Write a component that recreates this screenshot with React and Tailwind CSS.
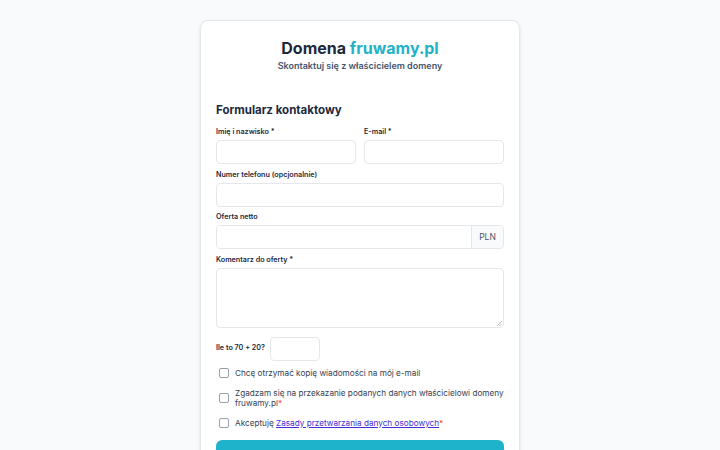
import React from 'react';

function Field({ label, children, className = '' }) {
  return (
    <div className={className}>
      <label className="block text-[7.2px] leading-[12px] font-semibold text-slate-800 mb-[2px]">{label}</label>
      {children}
    </div>
  );
}

function Check({ children }) {
  return (
    <label className="flex items-center gap-[6px] text-[8.2px] leading-[10px] text-gray-700">
      <span className="ml-[3px] w-[10px] h-[10px] shrink-0 rounded-[2px] border border-gray-400 bg-white" />
      <span>{children}</span>
    </label>
  );
}

export default function App() {
  const input = 'block w-full h-[24px] rounded-[4px] border border-gray-200 bg-white';
  return (
    <div className="min-h-screen bg-gray-50 pt-5" style={{ fontFamily: 'Inter, "Noto Sans", sans-serif' }}>
      <div className="w-[320px] mx-auto bg-white rounded-lg border border-gray-200 shadow-sm px-[15px] pt-4 pb-6">
        <h1 className="text-center text-[16px] leading-[22px] font-bold text-slate-800">
          Domena <span className="text-[#22b3c8]">fruwamy.pl</span>
        </h1>
        <p className="text-center text-[9px] leading-[14px] font-semibold text-slate-600">Skontaktuj się z właścicielem domeny</p>

        <h2 className="mt-7 text-[11.5px] leading-[18px] font-bold text-slate-800">Formularz kontaktowy</h2>

        <div className="mt-[7px] flex flex-col gap-[4.5px]">
          <div className="grid grid-cols-2 gap-2">
            <Field label="Imię i nazwisko *"><div className={input} /></Field>
            <Field label="E-mail *"><div className={input} /></Field>
          </div>
          <Field label="Numer telefonu (opcjonalnie)"><div className={input} /></Field>
          <Field label="Oferta netto">
            <div className="flex h-[24px] rounded-[4px] border border-gray-200 overflow-hidden">
              <div className="flex-1 bg-white" />
              <div className="w-[32px] bg-gray-50 border-l border-gray-200 flex items-center justify-center text-[8.5px] text-gray-600">PLN</div>
            </div>
          </Field>
          <Field label="Komentarz do oferty *">
            <div className="relative h-[60px] rounded-[4px] border border-gray-200 bg-white">
              <svg className="absolute right-[1px] bottom-[1px]" width="5" height="5" viewBox="0 0 5 5">
                <path d="M5 0L0 5M5 2.5L2.5 5" stroke="#9ca3af" strokeWidth="0.7" />
              </svg>
            </div>
          </Field>
        </div>

        <div className="mt-[9px] flex items-center gap-[5px]">
          <span className="text-[7.2px] font-semibold text-slate-800">Ile to 70 + 20?</span>
          <div className="w-[50px] h-[24px] rounded-[4px] border border-gray-200 bg-white" />
        </div>

        <div className="mt-[7px] flex flex-col gap-[10px]">
          <Check>Chcę otrzymać kopię wiadomości na mój e-mail</Check>
          <Check>
            Zgadzam się na przekazanie podanych danych właścicielowi domeny fruwamy.pl<span className="text-red-500">*</span>
          </Check>
          <Check>
            Akceptuję <a href="#" className="text-indigo-700 underline">Zasady przetwarzania danych osobowych</a><span className="text-red-500">*</span>
          </Check>
        </div>

        <button className="mt-[12px] w-full h-[30px] rounded-[6px] bg-[#1fb3cb] text-white text-[10px] font-semibold">Wyślij wiadomość</button>
      </div>
    </div>
  );
}
